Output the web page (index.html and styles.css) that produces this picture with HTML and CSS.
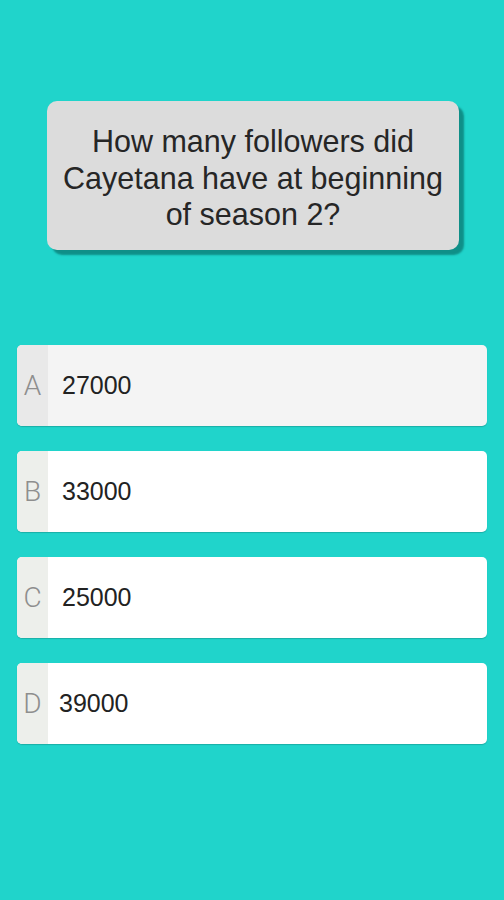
FILE: index.html
```html
<!DOCTYPE html>
<html>
<head>
<meta charset="utf-8">
<link rel="stylesheet" href="styles.css">
</head>
<body>
<main class="screen">
  <section class="question">
    <p class="question-text">How many followers did Cayetana have at beginning of season 2?</p>
  </section>
  <section class="answers">
    <div class="answer answer-active"><span class="letter">A</span><span class="value">27000</span></div>
    <div class="answer"><span class="letter">B</span><span class="value">33000</span></div>
    <div class="answer"><span class="letter">C</span><span class="value">25000</span></div>
    <div class="answer"><span class="letter">D</span><span class="value value-tight">39000</span></div>
  </section>
</main>
</body>
</html>
```
FILE: styles.css
```css
html, body {
  margin: 0;
  padding: 0;
  background: #20d4cb;
}
.screen {
  width: 504px;
  height: 900px;
  display: flex;
  flex-direction: column;
  font-family: "Liberation Sans", Arial, sans-serif;
}
.question {
  margin: 101px 0 0 47px;
  width: 412px;
  height: 149px;
  box-sizing: border-box;
  padding-top: 5px;
  background: #dcdcdc;
  border-radius: 10px;
  box-shadow: 5px 5px 2px #0f8f88;
  display: flex;
  align-items: center;
  justify-content: center;
}
.question-text {
  margin: 0;
  padding: 0 8px;
  text-align: center;
  font-size: 30.5px;
  line-height: 36.5px;
  color: #262626;
}
.answers {
  margin-top: 95px;
  padding: 0 17px;
  display: flex;
  flex-direction: column;
  gap: 25px;
}
.answer {
  height: 81px;
  background: #ffffff;
  border-radius: 5px;
  display: flex;
  align-items: center;
  overflow: hidden;
  box-shadow: 0 1px 1px rgba(0,0,0,0.18);
}
.answer-active {
  background: #f4f4f4;
}
.letter {
  width: 31px;
  align-self: stretch;
  background: #edefeb;
  display: flex;
  align-items: center;
  justify-content: center;
  font-family: Roboto, "Liberation Sans", sans-serif;
  font-weight: 300;
  font-size: 28px;
  color: #8e8e8e;
}
.answer-active .letter {
  background: #e9e9e9;
}
.value {
  margin-left: 14px;
  font-size: 25px;
  color: #222;
}
.value-tight {
  margin-left: 11px;
}
```
